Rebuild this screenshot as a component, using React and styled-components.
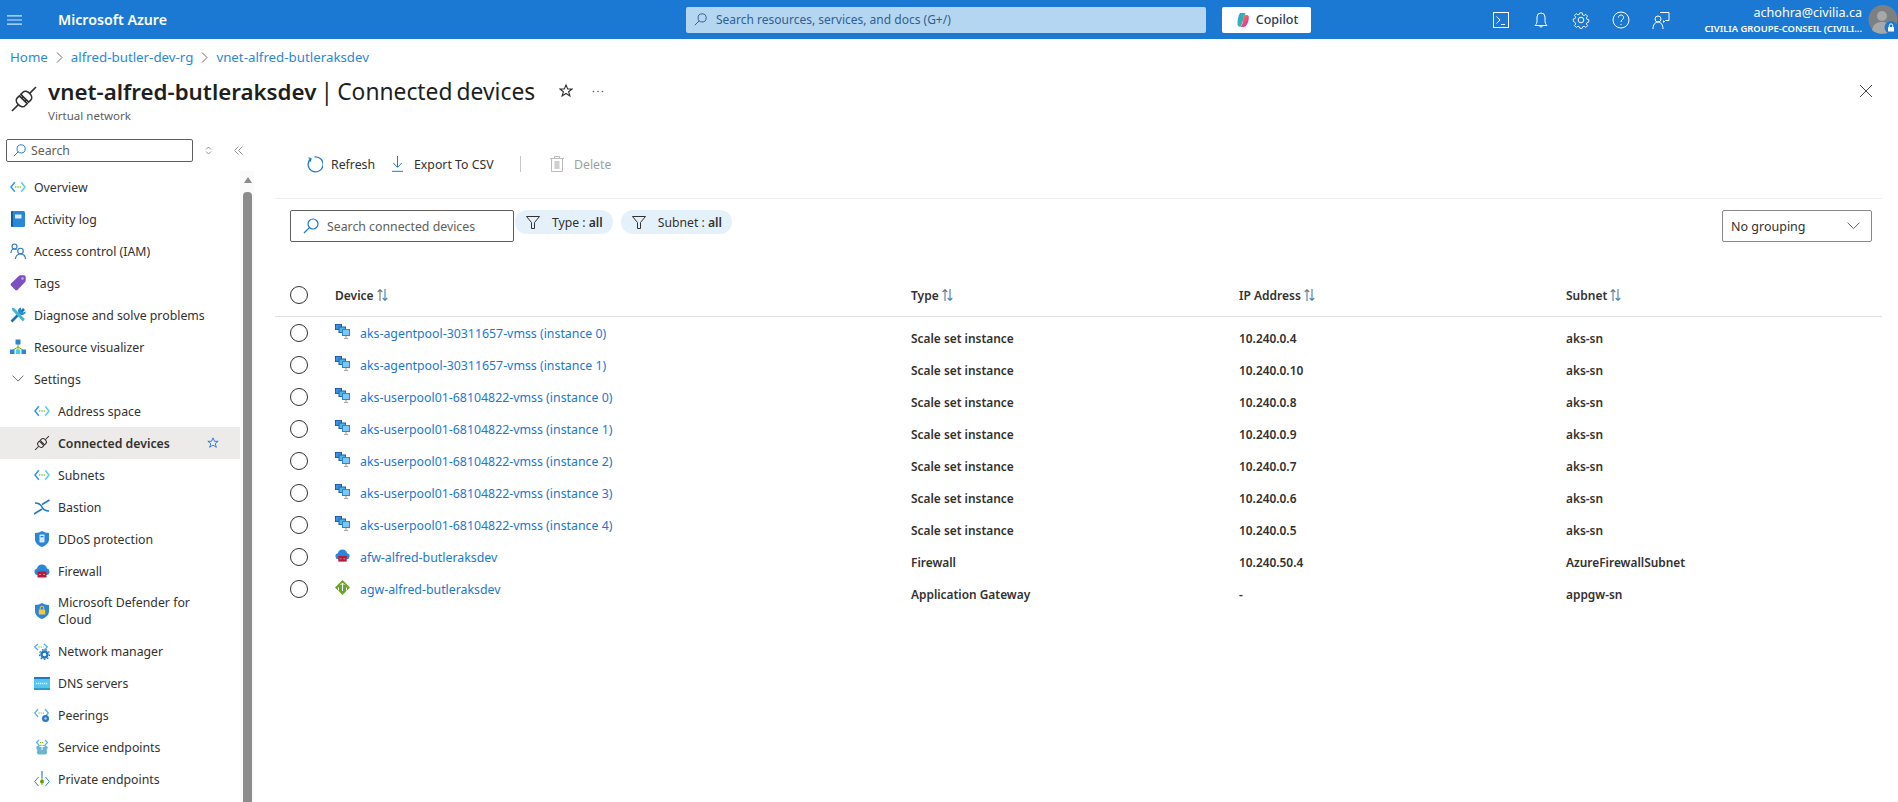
import React from 'react'
import styled, { createGlobalStyle } from 'styled-components'

const GlobalStyle = createGlobalStyle`
  html, body { margin: 0; padding: 0; height: 100%; background: #fff; overflow: hidden; }
  body { font-family: "Noto Sans", "Open Sans", "Liberation Sans", sans-serif; color: #323130; }
  * { box-sizing: border-box; }
`

const Page = styled.div`
  width: 1898px;
  height: 802px;
  display: flex;
  flex-direction: column;
  overflow: hidden;
`

/* top bar */
const TopBar = styled.header`
  height: 39px;
  flex: none;
  background: #1b79d3;
  color: #fff;
  display: flex;
  align-items: center;
`
const Burger = styled.div`
  width: 58px;
  padding-left: 7px;
  display: flex;
  align-items: center;
`
const Brand = styled.div`
  width: 628px;
  font-size: 14.2px;
  font-weight: 600;
`
const GlobalSearch = styled.div`
  width: 520px;
  height: 26px;
  border-radius: 2px;
  background: #b5d6f1;
  color: #2f5f92;
  font-size: 12px;
  display: flex;
  align-items: center;
  gap: 9px;
  padding-left: 8px;
`
const CopilotButton = styled.div`
  margin-left: 16px;
  width: 89px;
  height: 26px;
  background: #fff;
  border-radius: 2px;
  color: #2b3a55;
  font-size: 12.5px;
  font-weight: 500;
  display: flex;
  align-items: center;
  justify-content: center;
  gap: 5px;
`
const TopIcons = styled.div`
  margin-left: 181px;
  display: flex;
  align-items: center;
  gap: 22px;
`
const Account = styled.div`
  margin-left: auto;
  width: 170px;
  padding-right: 6px;
  text-align: right;
  display: flex;
  flex-direction: column;
  gap: 1px;
`
const Email = styled.div`
  font-size: 12.6px;
  line-height: 17px;
`
const Tenant = styled.div`
  font-size: 9.4px;
  font-weight: 600;
  line-height: 14px;
  white-space: nowrap;
`
const Avatar = styled.div`
  width: 30px;
  height: 29px;
  flex: none;
`

/* breadcrumb + title */
const Crumbs = styled.nav`
  height: 36px;
  flex: none;
  padding-left: 10px;
  display: flex;
  align-items: center;
  gap: 8px;
  font-size: 13.3px;
`
const Crumb = styled.a`
  color: #2b88d8;
`
const TitleRow = styled.div`
  height: 55px;
  flex: none;
  padding: 0 26px 0 10px;
  display: flex;
  align-items: flex-start;
`
const TitleIcon = styled.div`
  width: 38px;
  padding-top: 10px;
  flex: none;
`
const TitleText = styled.div`
  width: 511px;
  flex: none;
  padding-top: 1px;
`
const Title = styled.h1`
  margin: 0;
  font-size: 22.8px;
  line-height: 32px;
  font-weight: 400;
  word-spacing: -1.8px;
  color: #201f1e;
  white-space: nowrap;
  b { font-weight: 600; font-size: 22.3px; }
`
const SubTitle = styled.div`
  font-size: 11.5px;
  line-height: 15px;
  color: #605e5c;
`
const TitleActions = styled.div`
  height: 32px;
  display: flex;
  align-items: center;
  gap: 19px;
  flex: 1;
  svg:last-child { margin-left: auto; }
`

/* body */
const Body = styled.div`
  flex: 1;
  min-height: 0;
  display: flex;
`
const Sidebar = styled.aside`
  width: 254px;
  flex: none;
  display: flex;
  flex-direction: column;
  min-height: 0;
`
const SideTools = styled.div`
  height: 41px;
  flex: none;
  padding: 9px 0 0 6px;
  display: flex;
  align-items: flex-start;
`
const SideSearch = styled.div`
  width: 187px;
  height: 23px;
  border: 1px solid #605e5c;
  border-radius: 2px;
  color: #605e5c;
  font-size: 12.3px;
  display: flex;
  align-items: center;
  gap: 5px;
  padding-left: 6px;
`
const SideTool = styled.div`
  height: 23px;
  display: flex;
  align-items: center;
  margin-left: ${(props) => props.$gap}px;
`
const SideBody = styled.div`
  flex: 1;
  min-height: 0;
  display: flex;
`
const Nav = styled.div`
  width: 240px;
  flex: none;
`
const NavItem = styled.div`
  min-height: ${(props) => (props.$tall ? 48 : 32)}px;
  padding: 0 21px 0 ${(props) => (props.$nested ? 34 : 10)}px;
  display: flex;
  align-items: center;
  gap: 8px;
  font-size: 12.3px;
  line-height: 17px;
  color: #323130;
  font-weight: ${(props) => (props.$active ? 600 : 400)};
  background: ${(props) => (props.$active ? '#edebe9' : 'transparent')};
`
const NavIcon = styled.span`
  width: 16px;
  height: 16px;
  flex: none;
  display: flex;
  align-items: center;
  justify-content: center;
`
const NavLabel = styled.span`
  flex: 1;
`
const ScrollTrack = styled.div`
  width: 14px;
  flex: none;
  padding: 6px 2px 0 3px;
  background: #fafafa;
  display: flex;
  flex-direction: column;
  align-items: stretch;
  gap: 9px;
`
const ScrollArrow = styled.div`
  height: 0;
  align-self: center;
  border-left: 4.5px solid transparent;
  border-right: 4.5px solid transparent;
  border-bottom: 6px solid #8a8a8a;
`
const ScrollThumb = styled.div`
  flex: 1;
  background: #8c8c8c;
  border-radius: 4px 4px 0 0;
`

/* main panel */
const Main = styled.main`
  flex: 1;
  min-width: 0;
  padding: 0 16px 0 21px;
`
const Toolbar = styled.div`
  height: 69px;
  padding: 0 0 0 31px;
  border-bottom: 1px solid #f0efee;
  display: flex;
  align-items: center;
`
const ToolButton = styled.div`
  width: ${(props) => props.$width}px;
  flex: none;
  display: flex;
  align-items: center;
  gap: ${(props) => props.$gap || 8}px;
  font-size: 12.3px;
  color: ${(props) => (props.$disabled ? '#a19f9d' : '#323130')};
`
const ToolSeparator = styled.div`
  width: 1px;
  height: 16px;
  margin: 0 29px 0 0;
  background: #c8c6c4;
`
const Filters = styled.div`
  margin-top: 11px;
  padding: 0 10px 0 15px;
  display: flex;
  align-items: flex-start;
`
const ListSearch = styled.div`
  width: 224px;
  height: 32px;
  margin-right: 1px;
  border: 1px solid #605e5c;
  border-radius: 2px;
  color: #605e5c;
  font-size: 12.3px;
  display: flex;
  align-items: center;
  gap: 8px;
  padding-left: 12px;
`
const Pill = styled.div`
  height: 24px;
  margin-right: 8px;
  padding: 0 10px 0 11px;
  border-radius: 12px;
  background: #e5f1fa;
  font-size: 12.2px;
  display: flex;
  align-items: center;
  gap: 12px;
  white-space: nowrap;
  span b { font-weight: 600; }
`
const GroupSelect = styled.div`
  margin-left: auto;
  width: 150px;
  height: 32px;
  border: 1px solid #8a8886;
  border-radius: 2px;
  padding: 0 11px 0 8px;
  font-size: 12.5px;
  display: flex;
  align-items: center;
  justify-content: space-between;
`
const TableHead = styled.div`
  margin-top: 33px;
  height: 42px;
  padding: 0 0 1px 15px;
  border-bottom: 1px solid #e1dfdd;
  display: grid;
  grid-template-columns: 45px 576px 328px 327px 1fr;
  align-items: center;
  font-size: 12px;
  font-weight: 600;
  color: #323130;
`
const HeadCell = styled.div`
  display: flex;
  align-items: center;
  gap: 3px;
`
const Row = styled.div`
  height: 32px;
  padding-left: 15px;
  display: grid;
  grid-template-columns: 45px 576px 328px 327px 1fr;
  align-items: center;
  font-size: 12px;
`
const Radio = styled.div`
  width: 18px;
  height: 18px;
  border: 1.3px solid #323130;
  border-radius: 50%;
`
const DeviceCell = styled.div`
  display: flex;
  align-items: center;
  gap: 10px;
`
const DeviceIcon = styled.span`
  width: 15px;
  height: 15px;
  margin-bottom: 4px;
  display: flex;
`
const DeviceLink = styled.a`
  color: #1b78d0;
  font-size: 12.35px;
`
const ValueCell = styled.div`
  padding-top: 10px;
  font-weight: 600;
  font-size: 11.9px;
  color: #323130;
`

/* icons */
const Hamburger = () => (
  <svg width="15" height="10" viewBox="0 0 15 10" fill="none" stroke="#cfe4f7" strokeWidth="1.2">
    <path d="M0 .8h15M0 5h15M0 9.2h15" />
  </svg>
)
const Lens = ({ size = 14, color = '#1b78d0' }) => (
  <svg width={size} height={size} viewBox="0 0 16 16" fill="none" stroke={color} strokeWidth="1.2">
    <circle cx="10" cy="6" r="5" />
    <path d="M6.4 9.6L1 15" />
  </svg>
)
const CopilotLogo = () => (
  <svg width="16" height="16" viewBox="0 0 16 16">
    <defs>
      <linearGradient id="cpA" x1="0" y1="0" x2="1" y2="1">
        <stop offset="0" stopColor="#2aa0e8" />
        <stop offset="1" stopColor="#3fc27a" />
      </linearGradient>
      <linearGradient id="cpB" x1="0" y1="0" x2="1" y2="1">
        <stop offset="0" stopColor="#f7a02c" />
        <stop offset="0.6" stopColor="#e8468a" />
        <stop offset="1" stopColor="#8a5ce0" />
      </linearGradient>
    </defs>
    <path d="M5 1h5.500L8 8.500 6 14.500C4 15 2.500 14 2.500 12 2.500 8 3 4 5 1z" fill="url(#cpA)" />
    <path d="M8.500 3H12c1.500 0 2 1.500 1.800 3-.3 3-1 6-2.800 8-.7.800-1.800 1-3 1H5.500C8 13 8 7 8.500 3z" fill="url(#cpB)" />
  </svg>
)
const TopIcon = ({ children }) => (
  <svg width="18" height="20" viewBox="0 0 18 20" fill="none" stroke="#fff" strokeWidth="1">
    {children}
  </svg>
)
const ShellIcon = () => (
  <TopIcon>
    <rect x="1.500" y="2.500" width="15" height="15" />
    <path d="M4.500 6.500l3.500 3.500-3.500 3.500M9 14.500h4" />
  </TopIcon>
)
const BellIcon = () => (
  <TopIcon>
    <path d="M3 15.500h12c-1.500-1.500-2-2.500-2-5V7a4 4 0 00-8 0v3.500c0 2.500-.5 3.500-2 5zM7.500 15.500a1.500 1.500 0 003 0" />
  </TopIcon>
)
const GearIcon = () => (
  <TopIcon>
    <circle cx="9" cy="10" r="2.800" />
    <path d="M7.600 1.800h2.800l.5 2.500 1.600.7 2.100-1.400 2 2-1.400 2.100.7 1.600 2.100.5v2.800l-2.100.5-.7 1.600 1.400 2.100-2 2-2.100-1.400-1.600.7-.5 1.700H7.600l-.5-1.700-1.600-.7-2.100 1.400-2-2 1.400-2.100-.7-1.600L0 11.700V8.900l2.100-.5.7-1.600L1.400 4.700l2-2 2.100 1.400 1.600-.7z" transform="translate(1.300 1.300) scale(.86)" />
  </TopIcon>
)
const HelpIcon = () => (
  <TopIcon>
    <circle cx="9" cy="10" r="8" />
    <path d="M6.500 7.500c0-3.300 5-3.300 5 0 0 2.300-2.500 2-2.500 4.500M9 14v1" />
  </TopIcon>
)
const FeedbackIcon = () => (
  <TopIcon>
    <path d="M8 2.500h9v8h-3.500l-2 2v-2" />
    <circle cx="6" cy="9" r="3" />
    <path d="M1 19c0-4 2-7 5-7s5 3 5 7" />
  </TopIcon>
)
const AvatarImage = () => (
  <svg width="30" height="29" viewBox="0 0 30 29">
    <circle cx="15" cy="14.500" r="14.500" fill="#7d8083" />
    <circle cx="14" cy="11" r="5" fill="#a6a8aa" />
    <path d="M4 25c1-6 5-8 10-8s8 2 10 8c-5 5-15 5-20 0z" fill="#a6a8aa" />
    <circle cx="23" cy="22.500" r="6.500" fill="#1b79d3" />
    <rect x="20" y="22" width="6" height="4.500" rx=".6" fill="#fff" />
    <path d="M21.300 22v-1.500a1.700 1.700 0 013.400 0V22" fill="none" stroke="#fff" strokeWidth="1" />
  </svg>
)
const Chevron = () => (
  <svg width="7" height="11" viewBox="0 0 7 11" fill="none" stroke="#605e5c" strokeWidth=".9">
    <path d="M1 .5l5 5-5 5" />
  </svg>
)
const PlugIcon = ({ size = 28, color = '#323130', weight = 1.6 }) => (
  <svg width={size} height={size} viewBox="0 0 28 28" fill="none" stroke={color} strokeWidth={weight * (28 / size)}>
    <g transform="rotate(-45 14 14)">
      <path d="M-3 14h9M31 14h-9" />
      <path d="M13 8.500H10C7.500 8.500 6 11 6 14s1.500 5.500 4 5.500h3zM15 8.500h3c2.500 0 4 2.500 4 5.500s-1.500 5.500-4 5.500h-3z" />
      <path d="M13 12h2M13 16h2" />
    </g>
  </svg>
)
const StarOutline = ({ color = '#323130', size = 14 }) => (
  <svg width={size} height={size} viewBox="0 0 14 14" fill="none" stroke={color} strokeWidth="1.100">
    <path d="M7 1l1.700 4h4.300l-3.400 2.700 1.300 4.300L7 9.500 3.100 12l1.300-4.300L1 5h4.300z" />
  </svg>
)
const Dots = () => (
  <svg width="12" height="3" viewBox="0 0 12 3" fill="#605e5c">
    <circle cx="1.500" cy="1.500" r=".8" />
    <circle cx="6" cy="1.500" r=".8" />
    <circle cx="10.500" cy="1.500" r=".8" />
  </svg>
)
const CloseIcon = () => (
  <svg width="12" height="12" viewBox="0 0 12 12" stroke="#323130" strokeWidth=".9">
    <path d="M0 0l12 12M12 0L0 12" />
  </svg>
)
const UpDown = () => (
  <svg width="9" height="9" viewBox="0 0 9 9" fill="none" stroke="#8a8886" strokeWidth=".9">
    <path d="M2 3.500l2.500-2.500L7 3.500M2 5.500l2.500 2.500L7 5.500" />
  </svg>
)
const DoubleLeft = () => (
  <svg width="9" height="9" viewBox="0 0 9 9" fill="none" stroke="#8a8886" strokeWidth=".9">
    <path d="M4.500.500L.5 4.500l4 4M8.500.500l-4 4 4 4" />
  </svg>
)
const VnetIcon = () => (
  <svg width="16" height="16" viewBox="0 0 16 16" fill="none">
    <path d="M4.800 3.200L1 8l3.800 4.800" stroke="#2a9ae6" strokeWidth="1.500" />
    <path d="M11.200 3.200L15 8l-3.800 4.800" stroke="#50d0f5" strokeWidth="1.500" />
    <circle cx="5.700" cy="8" r=".8" fill="#7fba00" />
    <circle cx="8" cy="8" r=".8" fill="#7fba00" />
    <circle cx="10.300" cy="8" r=".8" fill="#7fba00" />
  </svg>
)
const BookIcon = () => (
  <svg width="14" height="16" viewBox="0 0 14 16">
    <rect width="14" height="16" rx="1.500" fill="#2a86d6" />
    <rect x="0" width="2" height="16" rx="1" fill="#155a9c" />
    <rect x="4" y="3.500" width="6.500" height="4" fill="#d5ecfb" />
  </svg>
)
const PeopleIcon = () => (
  <svg width="16" height="16" viewBox="0 0 16 16" fill="none" stroke="#2a78c8" strokeWidth="1.100">
    <circle cx="4.500" cy="3.500" r="2.500" />
    <path d="M1 10c0-2.500 1.500-4 3.500-4 .8 0 1.500.2 2 .6" />
    <circle cx="10.500" cy="8" r="2.800" />
    <path d="M5.500 16c0-3 2-5 5-5s5 2 5 5" />
  </svg>
)
const TagIcon = () => (
  <svg width="16" height="16" viewBox="0 0 16 16">
    <path d="M1 8.500L9 .8c.4-.3.9-.5 1.400-.5H14c.9 0 1.700.8 1.700 1.700v3.600c0 .5-.2 1-.6 1.400l-7.700 8c-.6.6-1.500.6-2.100 0L1 10.600c-.6-.6-.6-1.500 0-2.100z" fill="#7d4fc4" />
    <circle cx="12.500" cy="3.500" r="1.200" fill="#c9b3ec" />
  </svg>
)
const ToolsIcon = () => (
  <svg width="16" height="16" viewBox="0 0 16 16">
    <path d="M1.500 14.500L9 7M9.500 6.500L14 2" stroke="#1f6fb8" strokeWidth="2.600" />
    <path d="M2 1l1.800-.3L14.800 12l-1.800 2.500L2.500 3.500z" fill="#43b3d8" />
    <path d="M11 .5c-2 .3-3.500 2.200-3 4.500l3 3c2.500.5 4.500-1 5-3.500l-3 1-2-2z" fill="#1f8fd0" />
  </svg>
)
const TreeIcon = () => (
  <svg width="16" height="16" viewBox="0 0 16 16">
    <path d="M8 5v4M8 8l-5 3M8 8l5 3M8 8v3" stroke="#7fba00" strokeWidth="1" fill="none" />
    <rect x="5.500" y=".5" width="5" height="5" fill="#2a86d6" />
    <rect x="0" y="10.500" width="4.500" height="4.500" fill="#2a86d6" />
    <rect x="5.800" y="10.500" width="4.500" height="4.500" fill="#50c7f0" />
    <rect x="11.500" y="10.500" width="4.500" height="4.500" fill="#2a86d6" />
  </svg>
)
const ChevronDown = ({ color = '#605e5c', w = 12 }) => (
  <svg width={w} height={w * 0.6} viewBox="0 0 12 7" fill="none" stroke={color} strokeWidth=".9">
    <path d="M.5.500L6 6 11.500.500" />
  </svg>
)
const BastionIcon = () => (
  <svg width="16" height="16" viewBox="0 0 16 16" fill="none" stroke="#1f78c8" strokeWidth="1.500">
    <path d="M0 15l8-5M15.500 1L8 5.500M1 4c3 0 6 2 7 4s3 4 7 4" />
  </svg>
)
const ShieldIcon = ({ children }) => (
  <svg width="14" height="16" viewBox="0 0 14 16">
    <path d="M7 0c2 1.300 4 1.800 7 2v6c0 4-3 6.500-7 8-4-1.500-7-4-7-8V2c3-.2 5-.7 7-2z" fill="#2a86d6" />
    {children}
  </svg>
)
const DdosIcon = () => (
  <ShieldIcon>
    <rect x="4.500" y="3.500" width="5" height="8" rx=".8" fill="#d5ecfb" />
    <rect x="5.500" y="5" width="3" height="1.300" fill="#2a86d6" />
  </ShieldIcon>
)
const DefenderIcon = () => (
  <ShieldIcon>
    <rect x="3.800" y="6.500" width="6.400" height="5" rx=".6" fill="#f5c842" />
    <path d="M5.200 6.500V5a1.800 1.800 0 013.600 0v1.500" fill="none" stroke="#f5c842" strokeWidth="1" />
  </ShieldIcon>
)
const FirewallIcon = ({ size = 16 }) => (
  <svg width={size} height={size} viewBox="0 0 16 16">
    <path d="M3.500 12A3.300 3.300 0 013 5.500C3.500 3 5.500 1.500 8 1.500s4.300 1.500 5 4A3.300 3.300 0 0112.500 12z" fill="#2a86d6" />
    <rect x="3.500" y="8.500" width="9" height="6" fill="#b8193a" />
    <path d="M5 11.500h2M9 11.500h2" stroke="#f0a0a8" strokeWidth=".8" />
  </svg>
)
const NetManagerIcon = () => (
  <svg width="16" height="17" viewBox="0 0 16 17" fill="none">
    <path d="M4 1L.7 4 4 7M10 1l3.300 3L10 7" stroke="#50b4e8" strokeWidth="1.200" />
    <path d="M4.500 4h5" stroke="#7fba00" strokeWidth="1.200" strokeDasharray="1.200 1" />
    <circle cx="10.500" cy="11.500" r="3" stroke="#1f78c8" strokeWidth="2.400" />
    <circle cx="10.500" cy="11.500" r="5" stroke="#1f78c8" strokeWidth="1.300" strokeDasharray="1.600 1.800" />
  </svg>
)
const DnsIcon = () => (
  <svg width="16" height="13" viewBox="0 0 16 13">
    <rect width="16" height="13" fill="#50c7f0" />
    <rect width="16" height="2" fill="#1f78c8" />
    <rect y="11" width="16" height="2" fill="#2a9ad8" />
    <path d="M2 6.500h12" stroke="#fff" strokeWidth="1.500" strokeDasharray="1.200 .8" />
  </svg>
)
const PeeringIcon = () => (
  <svg width="16" height="15" viewBox="0 0 16 15" fill="none">
    <path d="M4 1L.7 5 4 9M11 1l3.300 4L11 9" stroke="#50b4e8" strokeWidth="1.200" />
    <path d="M4.500 5h6" stroke="#7fba00" strokeWidth="1.200" strokeDasharray="1.200 1" />
    <circle cx="11.500" cy="10.500" r="3.500" fill="#2a78c8" />
    <circle cx="11.500" cy="10.500" r="1.300" fill="#a0d0f0" />
  </svg>
)
const ServiceIcon = () => (
  <svg width="16" height="16" viewBox="0 0 16 16" fill="none">
    <path d="M3.500 11a2.500 2.500 0 01.5-4.500C6 5.500 10 5.500 12 6.500a2.500 2.500 0 01.5 4.500c1 2 1 4-1 4.500h-7c-2-.5-2-2.500-1-4.500z" fill="#3a9cc4" opacity=".75" />
    <path d="M5 1L2.500 3.500 5 6M11 1l2.500 2.500L11 6" stroke="#50b4e8" strokeWidth="1.200" />
    <path d="M6 3.500h4" stroke="#7fba00" strokeWidth="1.200" strokeDasharray="1.200 .8" />
    <path d="M8 4v7M5.500 7.500h5" stroke="#fff" strokeWidth="1" />
  </svg>
)
const PrivateIcon = () => (
  <svg width="16" height="16" viewBox="0 0 16 16" fill="none">
    <path d="M4.500 6L.7 10.500 4.500 15M11.500 6l3.800 4.500-3.800 4.500" stroke="#2a86d6" strokeWidth="1" />
    <path d="M8 0v7" stroke="#2a86d6" strokeWidth="1.200" />
    <path d="M8 7v7" stroke="#7fba00" strokeWidth="1" />
    <circle cx="8" cy="10.500" r="2" fill="#5ea000" />
  </svg>
)
const RefreshIcon = () => (
  <svg width="17" height="17" viewBox="0 0 17 17" fill="none" stroke="#1f78d1" strokeWidth="1.200">
    <path d="M5 2.500A7.500 7.500 0 108.500 1" />
    <path d="M2.500 1.800L5 2.800l-1 3" />
  </svg>
)
const ExportIcon = () => (
  <svg width="11" height="16" viewBox="0 0 11 16" fill="none" stroke="#1f78d1" strokeWidth="1">
    <path d="M5.500 0v11M1.200 7l4.300 4.300L9.800 7M0 15.300h11" />
  </svg>
)
const TrashIcon = () => (
  <svg width="14" height="16" viewBox="0 0 14 16" fill="none" stroke="#bdbbb9" strokeWidth="1">
    <path d="M0 2.500h14M4.500 2.500V.5h5v2M1.500 2.500v13h11v-13" />
    <rect x="4.500" y="5" width="5" height="8" fill="#d2d0ce" stroke="none" />
  </svg>
)
const FunnelIcon = () => (
  <svg width="14" height="13" viewBox="0 0 14 13" fill="none" stroke="#323130" strokeWidth="1">
    <path d="M.5.500h13L8.500 6.500v6h-3v-6z" />
  </svg>
)
const SortIcon = () => (
  <svg width="11" height="12" viewBox="0 0 11 12" fill="none" strokeWidth="1.100">
    <path d="M3 12V1M.7 3L3 .7 5.300 3" stroke="#6b7480" />
    <path d="M8 0v11M5.700 9L8 11.300 10.300 9" stroke="#3d7fb8" />
  </svg>
)
const VmssIcon = () => (
  <svg width="15" height="15" viewBox="0 0 15 15">
    <rect x="0" y="0" width="7" height="6" fill="#1d5fa8" />
    <rect x="1" y="1" width="5" height="4" fill="#3a96e0" />
    <rect x="3.500" y="2.500" width="7.500" height="6.500" fill="#1d5fa8" />
    <rect x="4.500" y="3.500" width="5.500" height="4.500" fill="#50b4ea" />
    <rect x="7" y="5" width="8" height="7" fill="#2a86d6" />
    <rect x="8" y="6" width="6" height="5" fill="#7cc8f2" />
    <path d="M11 12v2" stroke="#a0aab4" strokeWidth="1.200" />
    <path d="M9 14.500h4" stroke="#a0aab4" strokeWidth="1" />
  </svg>
)
const GatewayIcon = () => (
  <svg width="15" height="15" viewBox="0 0 15 15">
    <path d="M7.500 0L15 7.500 7.500 15 0 7.500z" fill="#6aa62a" />
    <path d="M7.500 3v8M5.500 5l2-2 2 2M3.500 7.500v3M11.500 7.500v3" stroke="#fff" strokeWidth="1" fill="none" />
  </svg>
)

const navItems = [
  { label: 'Overview', icon: <VnetIcon /> },
  { label: 'Activity log', icon: <BookIcon /> },
  { label: 'Access control (IAM)', icon: <PeopleIcon /> },
  { label: 'Tags', icon: <TagIcon /> },
  { label: 'Diagnose and solve problems', icon: <ToolsIcon /> },
  { label: 'Resource visualizer', icon: <TreeIcon /> },
  { label: 'Settings', icon: <ChevronDown /> },
  { label: 'Address space', icon: <VnetIcon />, nested: true },
  { label: 'Connected devices', icon: <PlugIcon size={16} weight={1} />, nested: true, active: true },
  { label: 'Subnets', icon: <VnetIcon />, nested: true },
  { label: 'Bastion', icon: <BastionIcon />, nested: true },
  { label: 'DDoS protection', icon: <DdosIcon />, nested: true },
  { label: 'Firewall', icon: <FirewallIcon />, nested: true },
  { label: 'Microsoft Defender for Cloud', icon: <DefenderIcon />, nested: true, tall: true },
  { label: 'Network manager', icon: <NetManagerIcon />, nested: true },
  { label: 'DNS servers', icon: <DnsIcon />, nested: true },
  { label: 'Peerings', icon: <PeeringIcon />, nested: true },
  { label: 'Service endpoints', icon: <ServiceIcon />, nested: true },
  { label: 'Private endpoints', icon: <PrivateIcon />, nested: true },
]

const scaleRow = (name) => ({
  name,
  icon: <VmssIcon />,
  type: 'Scale set instance',
  subnet: 'aks-sn',
})

const devices = [
  { ...scaleRow('aks-agentpool-30311657-vmss (instance 0)'), ip: '10.240.0.4' },
  { ...scaleRow('aks-agentpool-30311657-vmss (instance 1)'), ip: '10.240.0.10' },
  { ...scaleRow('aks-userpool01-68104822-vmss (instance 0)'), ip: '10.240.0.8' },
  { ...scaleRow('aks-userpool01-68104822-vmss (instance 1)'), ip: '10.240.0.9' },
  { ...scaleRow('aks-userpool01-68104822-vmss (instance 2)'), ip: '10.240.0.7' },
  { ...scaleRow('aks-userpool01-68104822-vmss (instance 3)'), ip: '10.240.0.6' },
  { ...scaleRow('aks-userpool01-68104822-vmss (instance 4)'), ip: '10.240.0.5' },
  { name: 'afw-alfred-butleraksdev', icon: <FirewallIcon size={15} />, type: 'Firewall', ip: '10.240.50.4', subnet: 'AzureFirewallSubnet' },
  { name: 'agw-alfred-butleraksdev', icon: <GatewayIcon />, type: 'Application Gateway', ip: '-', subnet: 'appgw-sn' },
]

const App = () => {
  return (
    <Page>
      <GlobalStyle />
      <TopBar>
        <Burger><Hamburger /></Burger>
        <Brand>Microsoft Azure</Brand>
        <GlobalSearch>
          <Lens size={13} color="#2f5f92" />
          Search resources, services, and docs (G+/)
        </GlobalSearch>
        <CopilotButton><CopilotLogo />Copilot</CopilotButton>
        <TopIcons>
          <ShellIcon />
          <BellIcon />
          <GearIcon />
          <HelpIcon />
          <FeedbackIcon />
        </TopIcons>
        <Account>
          <Email>achohra@civilia.ca</Email>
          <Tenant>CIVILIA GROUPE-CONSEIL (CIVILI...</Tenant>
        </Account>
        <Avatar><AvatarImage /></Avatar>
      </TopBar>

      <Crumbs>
        <Crumb>Home</Crumb>
        <Chevron />
        <Crumb>alfred-butler-dev-rg</Crumb>
        <Chevron />
        <Crumb>vnet-alfred-butleraksdev</Crumb>
      </Crumbs>

      <TitleRow>
        <TitleIcon><PlugIcon /></TitleIcon>
        <TitleText>
          <Title><b>vnet-alfred-butleraksdev</b> | Connected devices</Title>
          <SubTitle>Virtual network</SubTitle>
        </TitleText>
        <TitleActions>
          <StarOutline />
          <Dots />
          <CloseIcon />
        </TitleActions>
      </TitleRow>

      <Body>
        <Sidebar>
          <SideTools>
            <SideSearch><Lens size={13} />Search</SideSearch>
            <SideTool $gap={11}><UpDown /></SideTool>
            <SideTool $gap={21}><DoubleLeft /></SideTool>
          </SideTools>
          <SideBody>
            <Nav>
              {navItems.map((item) => (
                <NavItem key={item.label} $nested={item.nested} $active={item.active} $tall={item.tall}>
                  <NavIcon>{item.icon}</NavIcon>
                  <NavLabel>{item.label}</NavLabel>
                  {item.active && <StarOutline color="#2a78d8" size={12} />}
                </NavItem>
              ))}
            </Nav>
            <ScrollTrack>
              <ScrollArrow />
              <ScrollThumb />
            </ScrollTrack>
          </SideBody>
        </Sidebar>

        <Main>
          <Toolbar>
            <ToolButton $width={86}><RefreshIcon />Refresh</ToolButton>
            <ToolButton $width={128} $gap={11}><ExportIcon />Export To CSV</ToolButton>
            <ToolSeparator />
            <ToolButton $width={70} $gap={10} $disabled><TrashIcon />Delete</ToolButton>
          </Toolbar>

          <Filters>
            <ListSearch><Lens size={16} />Search connected devices</ListSearch>
            <Pill><FunnelIcon /><span>Type : <b>all</b></span></Pill>
            <Pill><FunnelIcon /><span>Subnet : <b>all</b></span></Pill>
            <GroupSelect>No grouping<ChevronDown w={13} /></GroupSelect>
          </Filters>

          <TableHead>
            <Radio />
            <HeadCell>Device <SortIcon /></HeadCell>
            <HeadCell>Type <SortIcon /></HeadCell>
            <HeadCell>IP Address <SortIcon /></HeadCell>
            <HeadCell>Subnet <SortIcon /></HeadCell>
          </TableHead>

          {devices.map((device) => (
            <Row key={device.name}>
              <Radio />
              <DeviceCell>
                <DeviceIcon>{device.icon}</DeviceIcon>
                <DeviceLink>{device.name}</DeviceLink>
              </DeviceCell>
              <ValueCell>{device.type}</ValueCell>
              <ValueCell>{device.ip}</ValueCell>
              <ValueCell>{device.subnet}</ValueCell>
            </Row>
          ))}
        </Main>
      </Body>
    </Page>
  )
}

export default App
